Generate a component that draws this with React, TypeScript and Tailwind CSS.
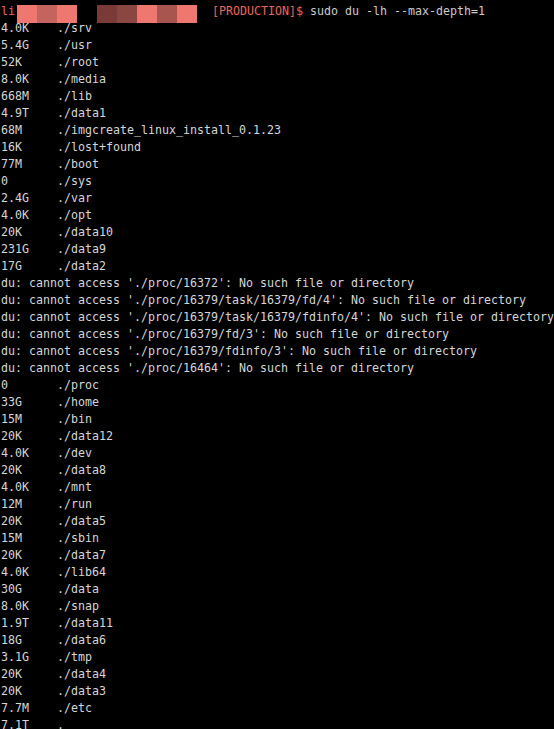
const rows: [string, string][] = [
    ["4.0K", "./srv"],
    ["5.4G", "./usr"],
    ["52K", "./root"],
    ["8.0K", "./media"],
    ["668M", "./lib"],
    ["4.9T", "./data1"],
    ["68M", "./imgcreate_linux_install_0.1.23"],
    ["16K", "./lost+found"],
    ["77M", "./boot"],
    ["0", "./sys"],
    ["2.4G", "./var"],
    ["4.0K", "./opt"],
    ["20K", "./data10"],
    ["231G", "./data9"],
    ["17G", "./data2"],
];

const errors: string[] = [
    "16372",
    "16379/task/16379/fd/4",
    "16379/task/16379/fdinfo/4",
    "16379/fd/3",
    "16379/fdinfo/3",
    "16464",
];

const rest: [string, string][] = [
    ["0", "./proc"],
    ["33G", "./home"],
    ["15M", "./bin"],
    ["20K", "./data12"],
    ["4.0K", "./dev"],
    ["20K", "./data8"],
    ["4.0K", "./mnt"],
    ["12M", "./run"],
    ["20K", "./data5"],
    ["15M", "./sbin"],
    ["20K", "./data7"],
    ["4.0K", "./lib64"],
    ["30G", "./data"],
    ["8.0K", "./snap"],
    ["1.9T", "./data11"],
    ["18G", "./data6"],
    ["3.1G", "./tmp"],
    ["20K", "./data4"],
    ["20K", "./data3"],
    ["7.7M", "./etc"],
    ["7.1T", "."],
];

const Row = ({ size, path }: { size: string; path: string }) => (
    <div className="h-[17px] whitespace-pre">
        {size.padEnd(8, " ")}
        {path}
    </div>
);

export default function App() {
    return (
        <div
            className="w-[554px] h-[729px] overflow-hidden bg-black text-[#d6d6d6] text-[11.63px] leading-[17px] pl-[1px] pt-[3px]"
            style={{ fontFamily: '"DejaVu Sans Mono", "Liberation Mono", monospace' }}
        >
            {/* prompt line, host name blurred out */}
            <div className="h-[17px] flex items-start whitespace-pre">
                <span className="text-[#e9685e]">li</span>
                <div className="ml-[2px] flex h-[18px] mt-[2px]">
                    <div className="w-[20px] bg-[#ee7870]" />
                    <div className="w-[20px] bg-[#c5645e]" />
                    <div className="w-[20px] bg-[#ee7870]" />
                </div>
                <div className="ml-[20px] flex h-[18px] mt-[2px]">
                    <div className="w-[20px] bg-[#7a3a38]" />
                    <div className="w-[20px] bg-[#8a4640]" />
                    <div className="w-[20px] bg-[#ee7870]" />
                    <div className="w-[20px] bg-[#a85550]" />
                    <div className="w-[20px] bg-[#ee7870]" />
                </div>
                <span className="ml-[15px] text-[#e9685e]">[PRODUCTION]$</span>
                <span className="text-[#cacaca]"> sudo du -lh --max-depth=1</span>
            </div>
            {rows.map(([s, p], i) => (
                <Row key={"a" + i} size={s} path={p} />
            ))}
            {errors.map((e) => (
                <div key={e} className="h-[17px] whitespace-pre">
                    du: cannot access './proc/{e}': No such file or directory
                </div>
            ))}
            {rest.map(([s, p], i) => (
                <Row key={"b" + i} size={s} path={p} />
            ))}
        </div>
    );
}
